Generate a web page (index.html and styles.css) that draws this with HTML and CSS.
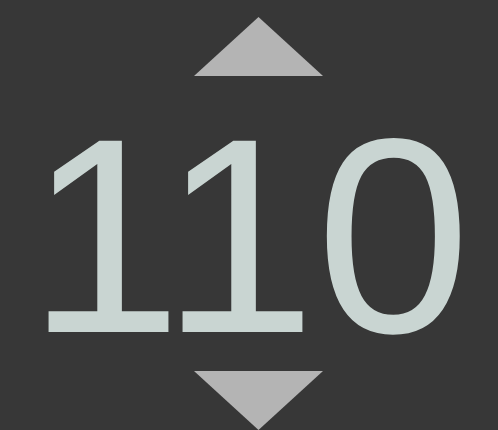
FILE: index.html
```html
<!DOCTYPE html>
<html lang="en">
<head>
<meta charset="utf-8">
<title>Number stepper</title>
<link rel="stylesheet" href="styles.css">
</head>
<body>
<div class="stepper">
  <div class="arrow" role="button" aria-label="Increase">
    <svg width="129" height="59" viewBox="0 0 129 59"><polygon points="64.5,0 129,59 0,59" fill="#b4b4b4"/></svg>
  </div>
  <div class="value">110</div>
  <div class="arrow" role="button" aria-label="Decrease">
    <svg width="129" height="59" viewBox="0 0 129 59"><polygon points="0,0 129,0 64.5,59" fill="#b4b4b4"/></svg>
  </div>
</div>
</body>
</html>
```

FILE: styles.css
```css
html, body {
  margin: 0;
  padding: 0;
  background: #373737;
  width: 498px;
  height: 430px;
  overflow: hidden;
}
.stepper {
  display: flex;
  flex-direction: column;
  padding-top: 17px;
}
.arrow {
  height: 59px;
  margin-left: 194px;
  width: 129px;
  flex: none;
}
.arrow svg {
  display: block;
}
.value {
  height: 295px;
  flex: none;
  font-family: "Liberation Sans", Arimo, Arial, sans-serif;
  font-size: 278px;
  line-height: normal;
  color: #c9d5d2;
  text-align: center;
  white-space: nowrap;
}
```
